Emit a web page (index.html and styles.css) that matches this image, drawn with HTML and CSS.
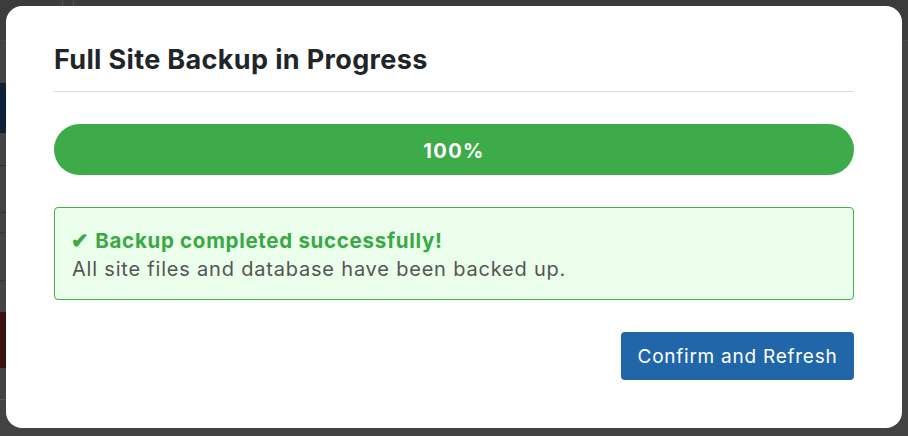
FILE: index.html
```html
<!DOCTYPE html>
<html lang="en">
<head>
<meta charset="utf-8">
<title>Full Site Backup</title>
<link rel="stylesheet" href="styles.css">
</head>
<body>
<div class="page">
  <div class="top-strip"><span class="rule"></span><span class="rule"></span></div>
  <div class="side">
    <div class="side-gap"></div>
    <div class="side-navy"></div>
    <div class="side-row"></div>
    <div class="side-row thin"></div>
    <div class="side-row blue"></div>
    <div class="side-row blue-end"></div>
    <div class="side-space"></div>
    <div class="side-red"></div>
    <div class="side-row last"></div>
  </div>
</div>
<div class="modal" role="dialog" aria-labelledby="modal-title">
  <h2 class="modal-title" id="modal-title">Full Site Backup in Progress</h2>
  <div class="progress"><div class="progress-bar" style="width:100%">100%</div></div>
  <div class="alert">
    <strong class="alert-head">✔ Backup completed successfully!</strong>
    <span class="alert-body">All site files and database have been backed up.</span>
  </div>
  <div class="modal-footer">
    <button class="btn-primary" type="button">Confirm and Refresh</button>
  </div>
</div>
</body>
</html>
```
FILE: styles.css
```css
html, body {
  margin: 0;
  padding: 0;
  height: 100%;
}
body {
  background: #434343;
  font-family: Inter, "Noto Sans", "Liberation Sans", sans-serif;
  overflow: hidden;
}
.page {
  height: 100%;
  display: flex;
  flex-direction: column;
}
.top-strip {
  height: 40px;
  background: #3c3c3c;
  border-bottom: 1px solid #4a4a4a;
  display: flex;
  padding-left: 62px;
  gap: 10px;
}
.rule {
  width: 1px;
  background: #555;
}
.side {
  width: 6px;
  display: flex;
  flex-direction: column;
}
.side-gap { height: 42px; }
.side-navy { height: 50px; background: #0f2136; }
.side-row { height: 32px; border-bottom: 1px solid #2f2f2f; }
.side-row.thin { height: 46px; }
.side-row.blue { height: 19px; border-bottom-color: #203a55; }
.side-row.blue-end { height: 47px; border-bottom-color: #203a55; }
.side-space { height: 31px; }
.side-red { height: 56px; background: #3b1011; }
.side-row.last { height: 31px; border-bottom-color: #555; }

.modal {
  position: fixed;
  left: 6px;
  top: 6px;
  width: 896px;
  height: 422px;
  box-sizing: border-box;
  background: #fff;
  border-radius: 16px;
  padding: 0 48px;
  display: flex;
  flex-direction: column;
}
.modal-title {
  margin: 0;
  padding: 42px 0 19px;
  font-size: 27px;
  line-height: 24px;
  font-weight: 700;
  color: #212529;
  border-bottom: 1px solid #dcdcdc;
  letter-spacing: 0.35px;
}
.progress {
  margin-top: 32px;
  height: 51px;
  border-radius: 26px;
  background: #e9ecef;
  overflow: hidden;
}
.progress-bar {
  height: 100%;
  background: #3dab4a;
  color: #fff;
  font-weight: 700;
  font-size: 20px;
  letter-spacing: 1.4px;
  display: flex;
  align-items: center;
  justify-content: center;
  padding-top: 2px;
  box-sizing: border-box;
}
.alert {
  margin-top: 32px;
  height: 93px;
  box-sizing: border-box;
  background: #ebfdeb;
  border: 1px solid #45ae4d;
  border-radius: 4px;
  padding: 19px 17px 0 16px;
  display: flex;
  flex-direction: column;
}
.alert-head {
  color: #3aa945;
  font-size: 20.5px;
  line-height: 28px;
  font-weight: 700;
  letter-spacing: 0.7px;
}
.alert-body {
  color: #555;
  font-size: 20px;
  line-height: 28px;
  letter-spacing: 0.8px;
  padding-left: 1px;
}
.modal-footer {
  margin-top: 32px;
  display: flex;
  justify-content: flex-end;
}
.btn-primary {
  height: 48px;
  width: 233px;
  border: 0;
  border-radius: 4px;
  background: #2166a9;
  color: #fff;
  font-family: inherit;
  font-size: 19px;
  letter-spacing: 0.75px;
  padding: 0;
}
```
